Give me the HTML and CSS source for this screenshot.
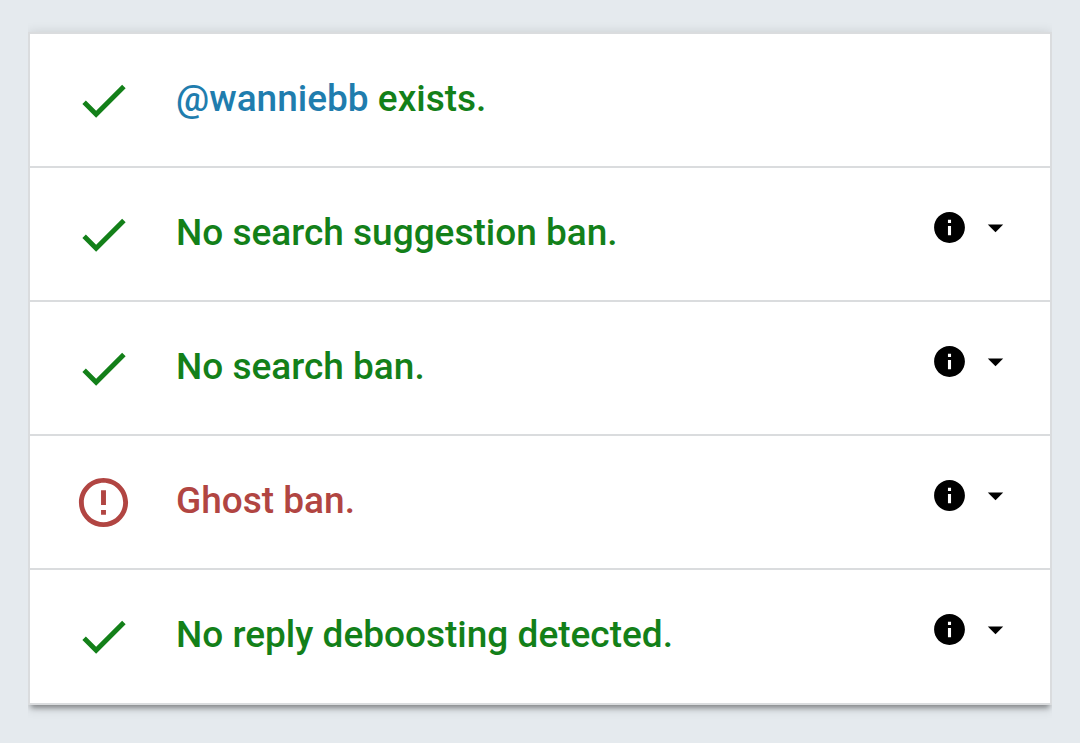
FILE: index.html
```html
<!DOCTYPE html>
<html lang="en">
  <head>
    <meta charset="UTF-8" />
    <meta name="viewport" content="width=device-width, initial-scale=1.0" />
    <title>Shadowban Test</title>
    <link rel="stylesheet" href="styles.css" />
  </head>
  <body>
    <svg class="sprite" aria-hidden="true">
      <symbol id="check" viewBox="0 0 24 24">
        <path d="M9 16.17L4.83 12l-1.42 1.41L9 19 21 7l-1.41-1.41z" />
      </symbol>
      <symbol id="error" viewBox="0 0 24 24">
        <path d="M11 15h2v2h-2zm0-8h2v6h-2zm.99-5C6.47 2 2 6.48 2 12s4.47 10 9.99 10C17.52 22 22 17.52 22 12S17.52 2 11.99 2zM12 20c-4.42 0-8-3.58-8-8s3.58-8 8-8 8 3.58 8 8-3.58 8-8 8z" />
      </symbol>
      <symbol id="info" viewBox="0 0 24 24">
        <path d="M12 2C6.48 2 2 6.48 2 12s4.48 10 10 10 10-4.48 10-10S17.52 2 12 2zm1 15h-2v-6h2v6zm0-8h-2V7h2v2z" />
      </symbol>
      <symbol id="caret" viewBox="0 0 24 24">
        <path d="M7 10l5 5 5-5z" />
      </symbol>
    </svg>

    <main>
      <ul class="results">
        <li class="result ok">
          <svg class="status"><use href="#check" /></svg>
          <p class="title"><a href="#">@wanniebb</a> exists.</p>
        </li>
        <li class="result ok">
          <svg class="status"><use href="#check" /></svg>
          <p class="title">No search suggestion ban.</p>
          <div class="actions">
            <button type="button" aria-label="Info"><svg><use href="#info" /></svg></button>
            <button type="button" aria-label="Expand"><svg><use href="#caret" /></svg></button>
          </div>
        </li>
        <li class="result ok">
          <svg class="status"><use href="#check" /></svg>
          <p class="title">No search ban.</p>
          <div class="actions">
            <button type="button" aria-label="Info"><svg><use href="#info" /></svg></button>
            <button type="button" aria-label="Expand"><svg><use href="#caret" /></svg></button>
          </div>
        </li>
        <li class="result bad">
          <svg class="status"><use href="#error" /></svg>
          <p class="title">Ghost ban.</p>
          <div class="actions">
            <button type="button" aria-label="Info"><svg><use href="#info" /></svg></button>
            <button type="button" aria-label="Expand"><svg><use href="#caret" /></svg></button>
          </div>
        </li>
        <li class="result ok">
          <svg class="status"><use href="#check" /></svg>
          <p class="title">No reply deboosting detected.</p>
          <div class="actions">
            <button type="button" aria-label="Info"><svg><use href="#info" /></svg></button>
            <button type="button" aria-label="Expand"><svg><use href="#caret" /></svg></button>
          </div>
        </li>
      </ul>
    </main>
  </body>
</html>
```

FILE: styles.css
```css
* {
  box-sizing: border-box;
}
body {
  margin: 0;
  background-color: #e5eaee;
  font-family: Roboto, "Liberation Sans", sans-serif;
}
.sprite {
  display: none;
}
main {
  padding: 32px 28px;
}
.results {
  margin: 0;
  padding: 0 0 1px;
  list-style: none;
  background-color: #fff;
  border: 2px solid #dadcde;
  box-shadow: 0 6px 5px -3px rgba(0, 0, 0, 0.35),
    0 2px 12px rgba(0, 0, 0, 0.16);
  /* keep the shadow above and below the card only */
  clip-path: inset(-20px 0);
}
.result {
  display: flex;
  align-items: flex-start;
  padding: 37px 36px 36px 44px;
}
.result + .result {
  border-top: 2px solid #dadcde;
}
.status {
  width: 59px;
  height: 59px;
  flex: none;
  fill: currentColor;
}
.title {
  flex: 1;
  margin: 0 0 0 43px;
  font-size: 37px;
  font-weight: 500;
  line-height: 56px;
}
.title a {
  color: #1f7dae;
  text-decoration: none;
}
.ok {
  color: #138019;
}
.bad {
  color: #b14542;
}
.actions {
  display: flex;
  gap: 9px;
}
.actions button {
  padding: 4px 0;
  border: none;
  background: none;
  color: #000;
  cursor: pointer;
}
.actions svg {
  display: block;
  width: 37px;
  height: 37px;
  fill: currentColor;
}
```
